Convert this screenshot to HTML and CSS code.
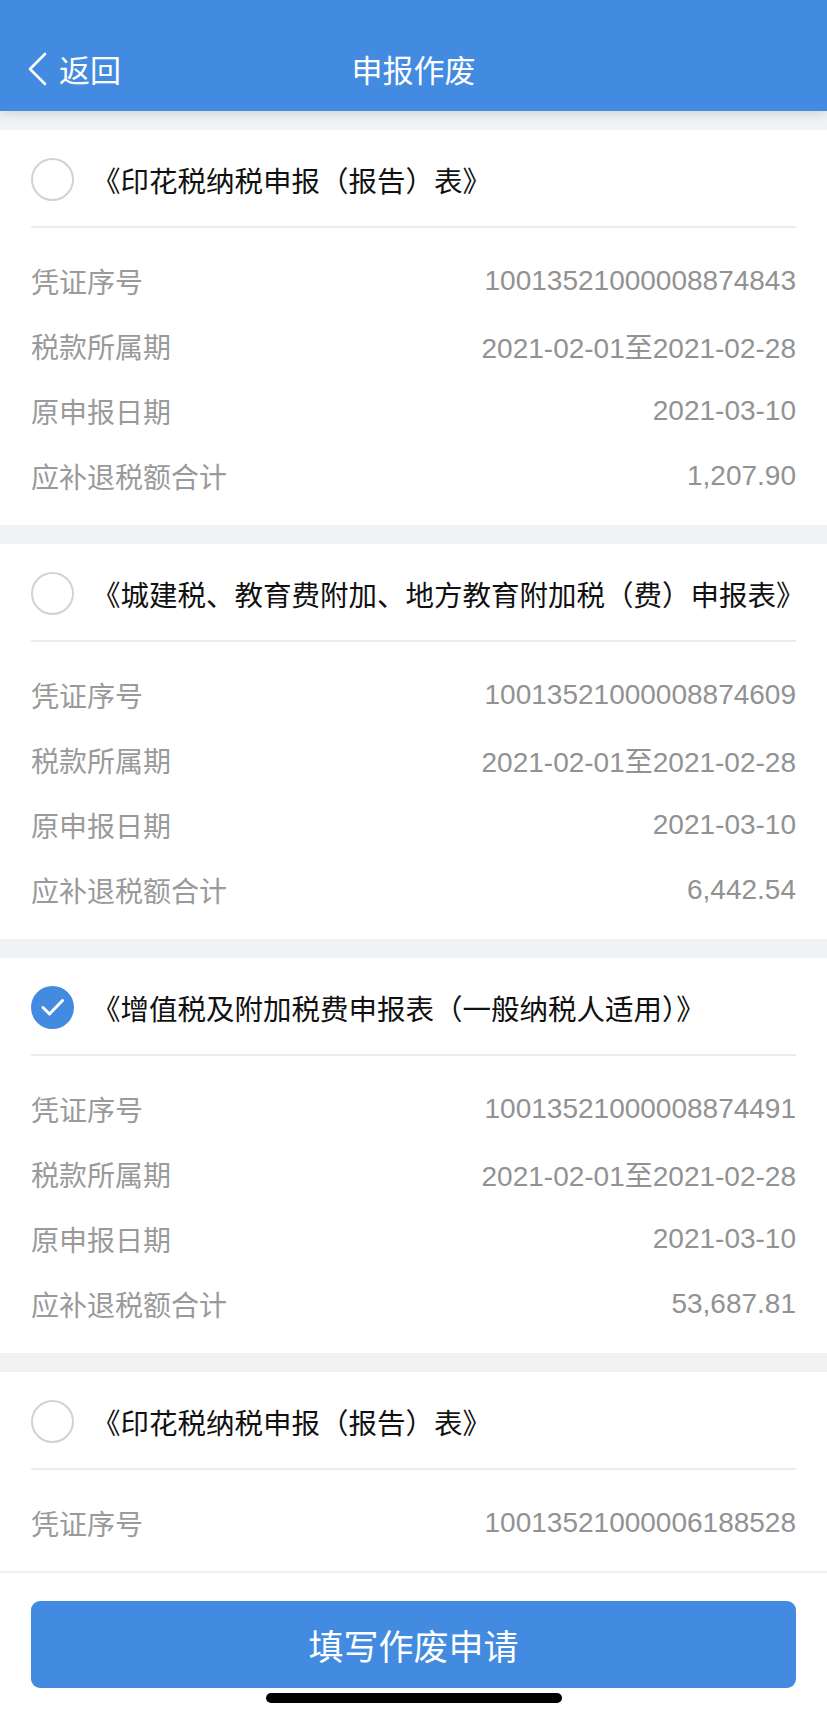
FILE: index.html
```html
<!DOCTYPE html>
<html lang="zh-CN">
<head>
    <meta charset="UTF-8">
    <meta name="viewport" content="width=device-width, initial-scale=1.0">
    <title>申报作废</title>
    <link rel="stylesheet" href="styles.css">
</head>
<body>
    <div class="page">
        <div class="header">
            <div class="back">
                <svg class="back-icon" width="22" height="34" viewBox="0 0 22 34">
                    <path d="M19 2 L4 17 L19 32" fill="none" stroke="#fff" stroke-width="2.6" stroke-linecap="round" stroke-linejoin="round"/>
                </svg>
                <span>返回</span>
            </div>
            <div class="title">申报作废</div>
            <div></div>
        </div>

        <div class="list">
            <div class="card">
                <div class="card-head">
                    <span class="radio"></span>
                    <span class="card-title">《印花税纳税申报（报告）表》</span>
                </div>
                <div class="rows">
                    <div class="row"><span>凭证序号</span><span class="val">10013521000008874843</span></div>
                    <div class="row"><span>税款所属期</span><span class="val">2021-02-01至2021-02-28</span></div>
                    <div class="row"><span>原申报日期</span><span class="val">2021-03-10</span></div>
                    <div class="row"><span>应补退税额合计</span><span class="val">1,207.90</span></div>
                </div>
            </div>

            <div class="card">
                <div class="card-head">
                    <span class="radio"></span>
                    <span class="card-title">《城建税、教育费附加、地方教育附加税（费）申报表》</span>
                </div>
                <div class="rows">
                    <div class="row"><span>凭证序号</span><span class="val">10013521000008874609</span></div>
                    <div class="row"><span>税款所属期</span><span class="val">2021-02-01至2021-02-28</span></div>
                    <div class="row"><span>原申报日期</span><span class="val">2021-03-10</span></div>
                    <div class="row"><span>应补退税额合计</span><span class="val">6,442.54</span></div>
                </div>
            </div>

            <div class="card">
                <div class="card-head">
                    <span class="radio checked">
                        <svg width="24" height="19" viewBox="0 0 24 19">
                            <path d="M2 9.5 L8.5 16 L21.5 2.5" fill="none" stroke="#fff" stroke-width="3" stroke-linecap="round" stroke-linejoin="round"/>
                        </svg>
                    </span>
                    <span class="card-title">《增值税及附加税费申报表（一般纳税人适用）》</span>
                </div>
                <div class="rows">
                    <div class="row"><span>凭证序号</span><span class="val">10013521000008874491</span></div>
                    <div class="row"><span>税款所属期</span><span class="val">2021-02-01至2021-02-28</span></div>
                    <div class="row"><span>原申报日期</span><span class="val">2021-03-10</span></div>
                    <div class="row"><span>应补退税额合计</span><span class="val">53,687.81</span></div>
                </div>
            </div>

            <div class="card last">
                <div class="card-head">
                    <span class="radio"></span>
                    <span class="card-title">《印花税纳税申报（报告）表》</span>
                </div>
                <div class="rows">
                    <div class="row"><span>凭证序号</span><span class="val">10013521000006188528</span></div>
                </div>
            </div>
        </div>

        <div class="footer">
            <button class="submit">填写作废申请</button>
            <div class="home-bar"></div>
        </div>
    </div>
</body>
</html>
```

FILE: styles.css
```css
* {
    box-sizing: border-box;
}
body {
    margin: 0;
    font-family: "Liberation Sans", "Noto Sans CJK SC", sans-serif;
    background-color: #f1f2f4;
    color: #111;
}
.page {
    height: 100vh;
    display: flex;
    flex-direction: column;
    overflow: hidden;
}
.header {
    height: 111px;
    flex-shrink: 0;
    padding: 26px 0 0 26px;
    background: #428be0;
    color: white;
    display: grid;
    grid-template-columns: 1fr auto 1fr;
    align-items: center;
    box-shadow: 0px 3px 10px rgba(0, 0, 0, 0.12);
    position: relative;
    z-index: 1;
}
.back {
    display: flex;
    align-items: center;
    gap: 11px;
    font-size: 31px;
}
.back-icon {
    display: block;
}
.title {
    font-size: 31px;
    margin-left: -26px;
}
.list {
    flex: 1;
    overflow: hidden;
    padding-top: 19px;
    display: flex;
    flex-direction: column;
    gap: 19px;
}
.card {
    flex-shrink: 0;
    background: white;
    padding: 0 31px;
}
.card.last {
    flex-grow: 1;
}
.card-head {
    height: 98px;
    padding-top: 3px;
    display: flex;
    align-items: center;
    gap: 18px;
    border-bottom: 2px solid #ebebeb;
}
.radio {
    width: 43px;
    height: 43px;
    flex-shrink: 0;
    border: 2px solid #d2d2d2;
    border-radius: 50%;
    display: flex;
    align-items: center;
    justify-content: center;
}
.radio.checked {
    background: #428be0;
    border-color: #428be0;
}
.radio svg {
    display: block;
}
.card-title {
    font-size: 28.5px;
    white-space: nowrap;
}
.rows {
    padding: 20px 0 17px;
}
.row {
    height: 65px;
    display: flex;
    justify-content: space-between;
    align-items: center;
    font-size: 28px;
    color: #9a9a9a;
}
.val {
    color: #929292;
}
.footer {
    height: 147px;
    flex-shrink: 0;
    background: white;
    border-top: 2px solid #eeeeee;
    padding: 28px 31px 0;
}
.submit {
    width: 100%;
    height: 87px;
    border: none;
    border-radius: 9px;
    background: #428be0;
    color: white;
    font-family: "Noto Sans CJK SC", sans-serif;
    font-size: 35px;
    cursor: pointer;
}
.home-bar {
    width: 296px;
    height: 10px;
    margin: 5px auto 0;
    border-radius: 5px;
    background: black;
}
```
